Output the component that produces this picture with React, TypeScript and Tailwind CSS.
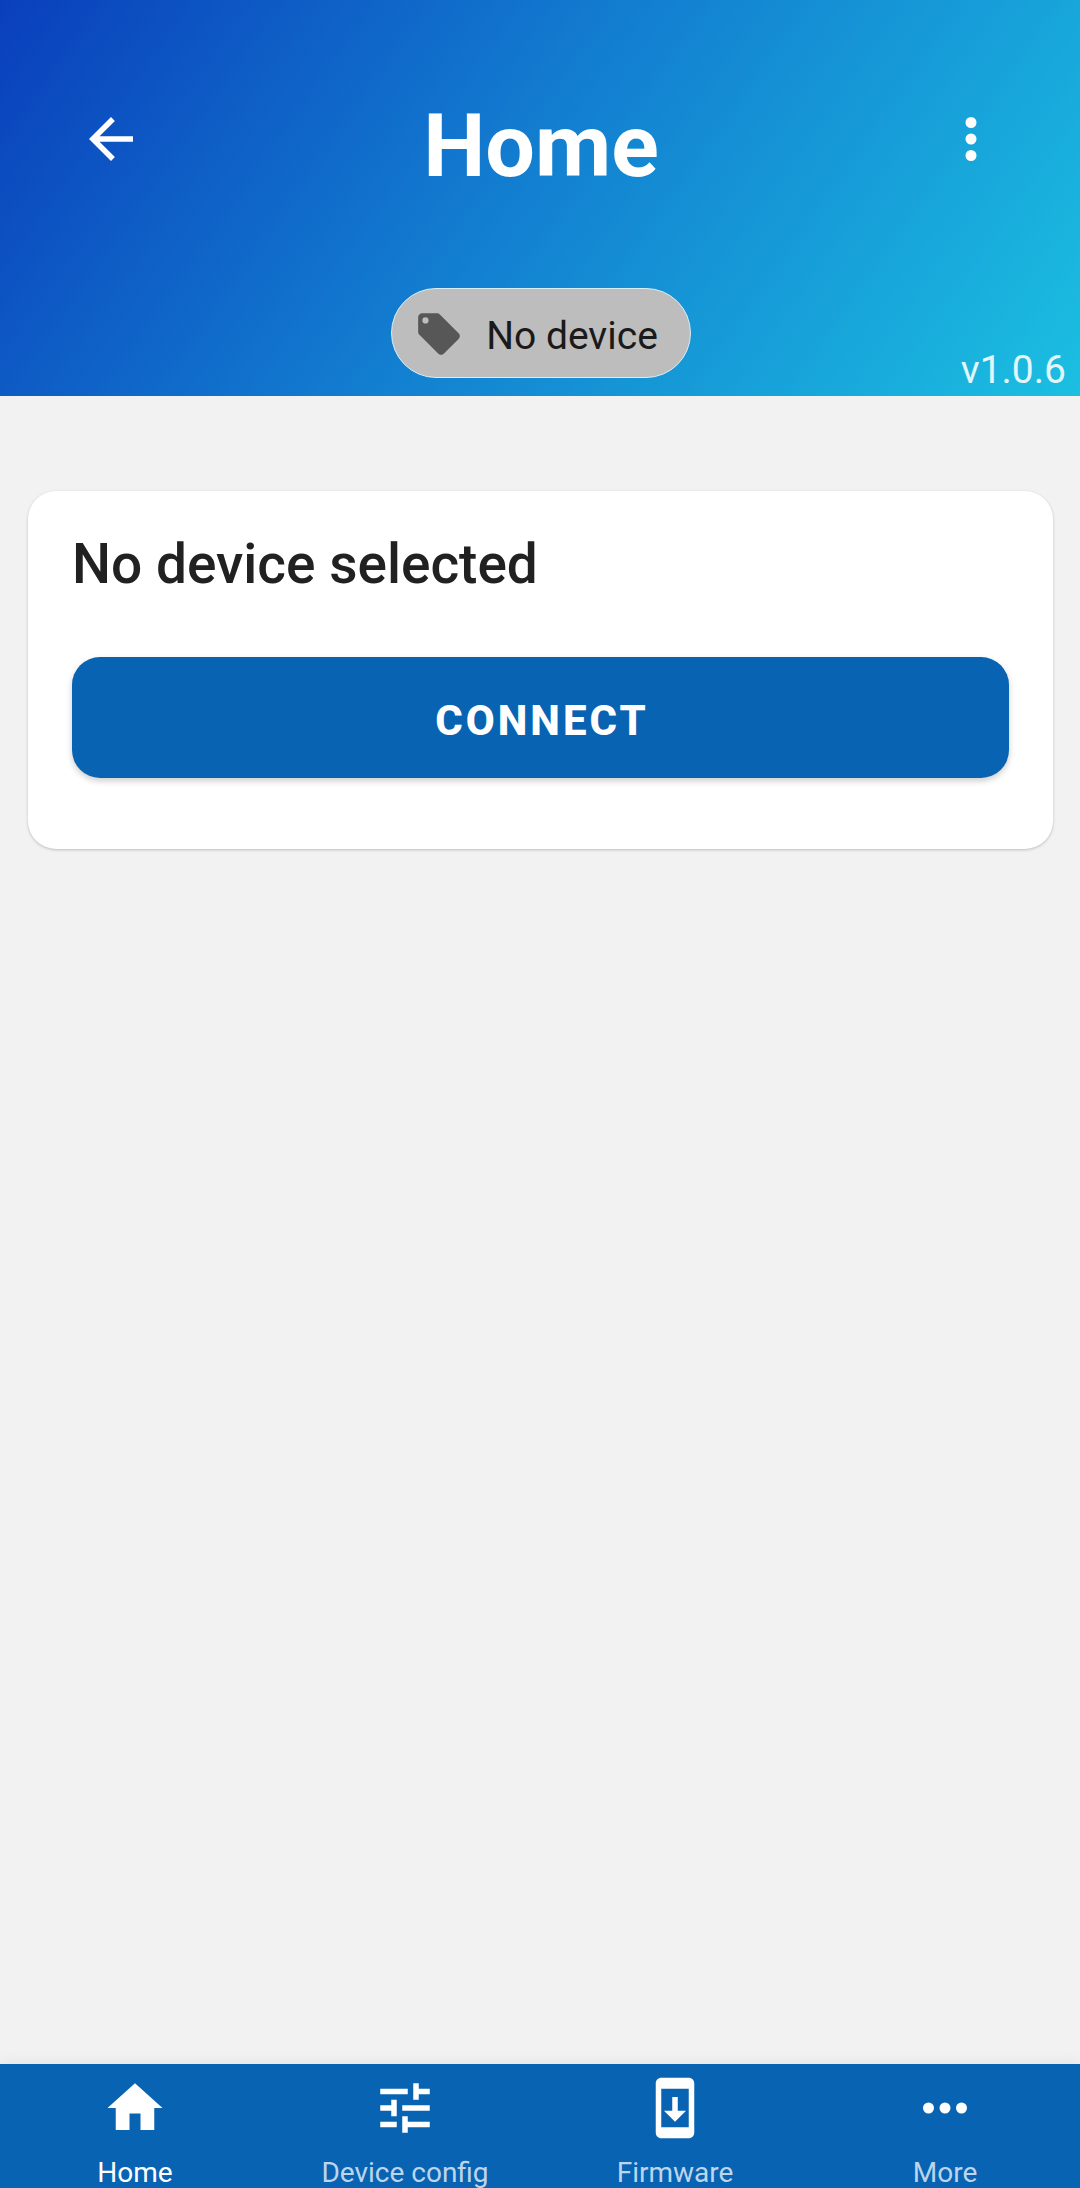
import type { ReactNode } from "react";

function Icon({ path, className }: { path: string; className: string }) {
  return (
    <svg viewBox="0 0 24 24" fill="currentColor" aria-hidden="true" className={className}>
      <path d={path} />
    </svg>
  );
}

const paths = {
  back: "M20 11H7.83l5.59-5.59L12 4l-8 8 8 8 1.41-1.41L7.83 13H20v-2z",
  dotsVertical:
    "M12 16a2 2 0 1 1 0 4 2 2 0 0 1 0-4m0-6a2 2 0 1 1 0 4 2 2 0 0 1 0-4m0-6a2 2 0 1 1 0 4 2 2 0 0 1 0-4z",
  tag: "M5.5 7A1.5 1.5 0 0 1 4 5.5 1.5 1.5 0 0 1 5.5 4 1.5 1.5 0 0 1 7 5.5 1.5 1.5 0 0 1 5.5 7m15.91 4.58-9-9C12.05 2.22 11.55 2 11 2H4c-1.11 0-2 .89-2 2v7c0 .55.22 1.05.59 1.41l8.99 9c.37.36.87.59 1.42.59.55 0 1.05-.23 1.41-.59l7-7c.37-.36.59-.86.59-1.41 0-.56-.23-1.06-.59-1.42z",
  home: "M10 20v-6h4v6h5v-8h3L12 3 2 12h3v8h5z",
  tune: "M3 17v2h6v-2H3zM3 5v2h10V5H3zm10 16v-2h8v-2h-8v-2h-2v6h2zM7 9v2H3v2h4v2h2V9H7zm14 4v-2H11v2h10zm-6-4h2V7h4V5h-4V3h-2v6z",
  firmware:
    "M17 1.01 7 1c-1.1 0-2 .9-2 2v18c0 1.1.9 2 2 2h10c1.1 0 2-.9 2-2V3c0-1.1-.9-1.99-2-1.99zM17 19H7V5h10v14zm-1-6h-3V8h-2v5H8l4 4 4-4z",
  dotsHorizontal:
    "M16 12a2 2 0 1 1 4 0 2 2 0 0 1-4 0m-6 0a2 2 0 1 1 4 0 2 2 0 0 1-4 0m-6 0a2 2 0 1 1 4 0 2 2 0 0 1-4 0z",
};

const tabs = [
  { label: "Home", icon: paths.home, active: true },
  { label: "Device config", icon: paths.tune, active: false },
  { label: "Firmware", icon: paths.firmware, active: false },
  { label: "More", icon: paths.dotsHorizontal, active: false },
];

function IconButton({ label, children }: { label: string; children: ReactNode }) {
  return (
    <button type="button" aria-label={label} className="mt-4 flex size-[66px] items-center justify-center">
      {children}
    </button>
  );
}

function Header() {
  return (
    <header className="relative bg-[linear-gradient(125deg,#0a3fbc_0%,#127acf_44%,#1bbfe1_100%)] pt-[90px] pr-[76px] pb-[18px] pl-[78px] text-white">
      <div className="flex items-start justify-between">
        <IconButton label="Back">
          <Icon path={paths.back} className="size-full" />
        </IconButton>
        <h1 className="text-[88px] leading-[112px] font-bold">Home</h1>
        <IconButton label="Menu">
          <Icon path={paths.dotsVertical} className="size-full" />
        </IconButton>
      </div>
      <div className="mt-[86px] flex justify-center">
        <button
          type="button"
          className="flex h-[90px] items-center gap-[22px] rounded-full border border-[#d9eef8] bg-[#bdbdbd] pt-0.5 pr-8 pl-[22px] text-[39px] text-[#1a1a1a]"
        >
          <Icon path={paths.tag} className="size-[50px] text-[#575757]" />
          <span className="pt-1">No device</span>
        </button>
      </div>
      <span className="absolute right-3.5 bottom-1 text-[39px] leading-[44px] text-[#e3f6fc]">v1.0.6</span>
    </header>
  );
}

function DeviceCard() {
  return (
    <section className="rounded-[28px] bg-white px-11 pt-[43px] pb-[71px] shadow-[0_1px_3px_rgba(0,0,0,0.22)]">
      <h2 className="text-[55px] leading-[60px] font-medium text-[#212121]">No device selected</h2>
      <button
        type="button"
        className="mt-[63px] h-[121px] w-full rounded-[28px] bg-[#0963b3] pt-1.5 pl-[3px] text-[42px] font-extrabold tracking-[3px] text-white uppercase shadow-[0_3px_6px_rgba(0,0,0,0.2)]"
      >
        Connect
      </button>
    </section>
  );
}

function TabBar() {
  return (
    <nav className="grid h-[124px] grid-cols-4 bg-[#0963b3] shadow-[0_-2px_14px_rgba(0,0,0,0.06)]">
      {tabs.map((tab) => (
        <a
          key={tab.label}
          href="#"
          aria-current={tab.active ? "page" : undefined}
          className={
            tab.active
              ? "flex flex-col items-center pt-[11px] text-white"
              : "flex flex-col items-center pt-[11px] text-[#bdd5eb]"
          }
        >
          <Icon path={tab.icon} className="size-[66px] text-white" />
          <span className="mt-4 text-[28px] leading-8">{tab.label}</span>
        </a>
      ))}
    </nav>
  );
}

export default function App() {
  return (
    <div className="flex min-h-screen flex-col bg-[#f2f2f2] font-[Roboto,sans-serif]">
      <Header />
      <main className="flex-1 pt-[95px] pr-[27px] pl-7">
        <DeviceCard />
      </main>
      <TabBar />
    </div>
  );
}
